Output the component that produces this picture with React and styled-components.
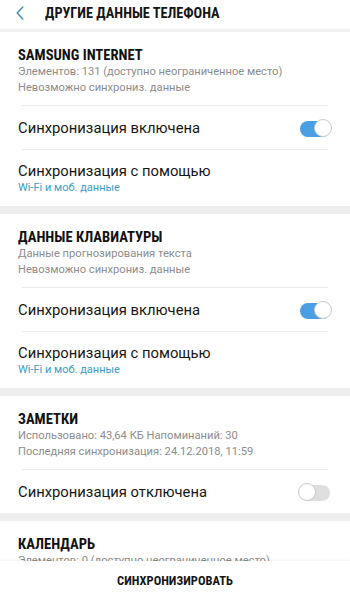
import React from "react";
import styled, { createGlobalStyle } from "styled-components";

const GlobalStyle = createGlobalStyle`
  html, body {
    margin: 0;
    padding: 0;
    background: #ffffff;
  }
  body {
    font-family: Roboto, "Noto Sans", sans-serif;
    color: #111;
  }
`;

const sections = [
  {
    title: "SAMSUNG INTERNET",
    lines: ["Элементов: 131 (доступно неограниченное место)", "Невозможно синхрониз. данные"],
    sync: true,
    via: true,
  },
  {
    title: "ДАННЫЕ КЛАВИАТУРЫ",
    lines: ["Данные прогнозирования текста", "Невозможно синхрониз. данные"],
    sync: true,
    via: true,
  },
  {
    title: "ЗАМЕТКИ",
    lines: ["Использовано: 43,64 КБ  Напоминаний: 30", "Последняя синхронизация: 24.12.2018, 11:59"],
    sync: false,
    via: false,
  },
  {
    title: "КАЛЕНДАРЬ",
    lines: ["Элементов: 0 (доступно неограниченное место)"],
    sync: null,
    via: false,
  },
];

const Toggle = ({ on }) => (
  <Switch $on={on}>
    <Switch.Knob $on={on} />
  </Switch>
);

const App = () => {
  return (
    <Screen>
      <GlobalStyle />
      <Header>
        <BackIcon width="8" height="14" viewBox="0 0 8 14">
          <path d="M6.8 1 L1.2 7 L6.8 13" fill="none" stroke="#4b8fc0" strokeWidth="1.5" strokeLinecap="round" strokeLinejoin="round" />
        </BackIcon>
        <Header.Title>ДРУГИЕ ДАННЫЕ ТЕЛЕФОНА</Header.Title>
      </Header>
      <Content>
        {sections.map((s, i) => (
          <Section key={i}>
            <Section.Head>
              <Section.Title>{s.title}</Section.Title>
              {s.lines.map((l, j) => (
                <Section.Line key={j}>{l}</Section.Line>
              ))}
            </Section.Head>
            {s.sync !== null && (
              <>
                <Divider />
                <ToggleRow>
                  <ToggleRow.Label>
                    {s.sync ? "Синхронизация включена" : "Синхронизация отключена"}
                  </ToggleRow.Label>
                  <Toggle on={s.sync} />
                </ToggleRow>
              </>
            )}
            {s.via && (
              <>
                <Divider />
                <ViaRow>
                  <ViaRow.Label>Синхронизация с помощью</ViaRow.Label>
                  <ViaRow.Value>Wi-Fi и моб. данные</ViaRow.Value>
                </ViaRow>
              </>
            )}
          </Section>
        ))}
      </Content>
      <BottomBar>
        <BottomBar.Button>СИНХРОНИЗИРОВАТЬ</BottomBar.Button>
      </BottomBar>
    </Screen>
  );
};

export default App;

const condensed = `"Liberation Sans Narrow", "Roboto Condensed", Roboto, sans-serif`;

const Screen = styled.div`
  width: 350px;
  height: 593px;
  display: flex;
  flex-direction: column;
  overflow: hidden;
  background: #ffffff;
`;

const Header = styled.div`
  height: 29px;
  flex-shrink: 0;
  display: flex;
  align-items: center;
  padding: 0 0 0 16px;
  border-bottom: 3px solid #f0f0f0;
`;

const BackIcon = styled.svg`
  display: block;
  margin-top: -3px;
`;

Header.Title = styled.span`
  margin-left: 21px;
  margin-top: -3px;
  font-family: ${condensed};
  font-weight: bold;
  font-size: 14.3px;
  color: #151515;
`;

const Content = styled.div`
  flex: 1;
  overflow: hidden;
  background: #eeeeee;
  display: flex;
  flex-direction: column;
  gap: 8px;
`;

const Section = styled.div`
  background: #ffffff;
  flex-shrink: 0;
`;

Section.Head = styled.div`
  padding: 14px 18px 9px;
`;

Section.Title = styled.div`
  font-family: ${condensed};
  font-weight: bold;
  font-size: 14.6px;
  line-height: 18px;
  color: #111;
`;

Section.Line = styled.div`
  font-size: 11.15px;
  line-height: 16px;
  color: #8c8c8c;
`;

const Divider = styled.div`
  height: 1px;
  margin: 0 22px 0 22px;
  background: #ececec;
`;

const ToggleRow = styled.div`
  height: 43px;
  display: flex;
  align-items: center;
  justify-content: space-between;
  padding: 0 20px 0 18px;
`;

ToggleRow.Label = styled.span`
  font-size: 14.8px;
  color: #161616;
`;

const Switch = styled.div`
  position: relative;
  width: 30px;
  height: 16px;
  margin-top: 2px;
  border-radius: 8px;
  background: ${p => (p.$on ? "#4a9fe3" : "#dedede")};
`;

Switch.Knob = styled.div`
  position: absolute;
  top: -2px;
  ${p => (p.$on ? "right: -2px;" : "left: -2px;")}
  width: 18px;
  height: 18px;
  box-sizing: border-box;
  border-radius: 50%;
  background: #ffffff;
  border: 1px solid #c9c9c9;
`;

const ViaRow = styled.div`
  padding: 11px 18px 11px;
`;

ViaRow.Label = styled.div`
  font-size: 14.8px;
  line-height: 20px;
  color: #161616;
`;

ViaRow.Value = styled.div`
  font-size: 11px;
  line-height: 14px;
  color: #3a9cc9;
`;

const BottomBar = styled.div`
  height: 32px;
  flex-shrink: 0;
  box-sizing: border-box;
  padding-top: 6px;
  display: flex;
  justify-content: center;
  align-items: center;
  background: #ffffff;
  box-shadow: 0 -1px 2px rgba(0, 0, 0, 0.06);
`;

BottomBar.Button = styled.span`
  font-family: ${condensed};
  font-weight: bold;
  font-size: 12.5px;
  color: #151515;
`;
